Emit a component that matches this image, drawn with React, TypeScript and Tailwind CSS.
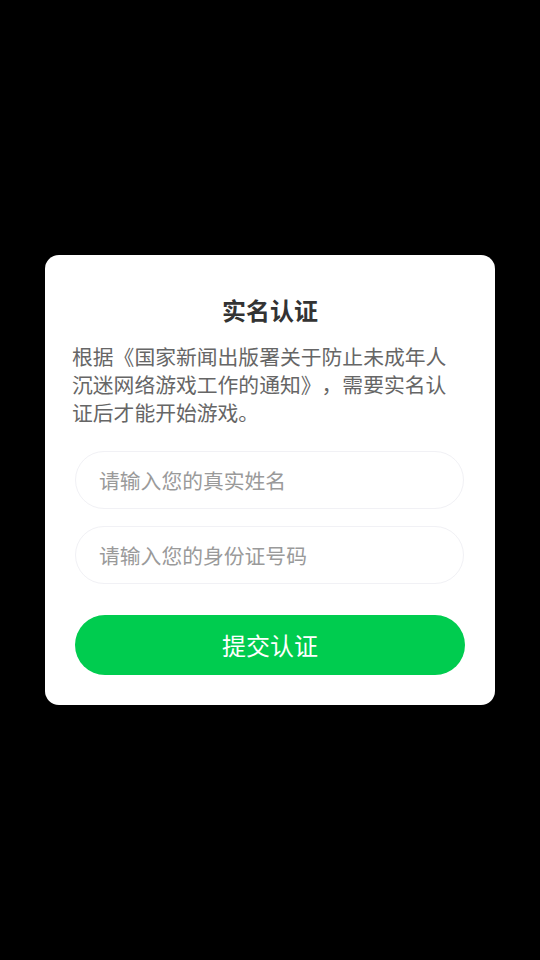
export default function App() {
  return (
    <div
      className="flex min-h-[960px] w-full items-center justify-center bg-black [text-spacing-trim:space-all]"
      style={{ fontFamily: '"Noto Sans CJK SC", "Noto Sans", sans-serif' }}
    >
      <div className="flex w-[450px] flex-col rounded-[14px] bg-white px-[30px] pt-[39px] pb-[30px]">
        {/* Title */}
        <h2 className="text-center text-[24px] font-bold leading-[32px] text-[#333333]">
          实名认证
        </h2>

        {/* Notice */}
        <p className="-ml-[3px] mt-[16px] text-[20.8px] leading-[28px] text-[#666666]">
          根据《国家新闻出版署关于防止未成年人沉迷网络游戏工作的通知》，需要实名认证后才能开始游戏。
        </p>

        {/* Inputs */}
        <input
          type="text"
          placeholder="请输入您的真实姓名"
          className="mt-[25px] h-[58px] w-[389px] rounded-full border border-[#f1f1f5] bg-white px-[23px] text-[20.8px] text-[#333333] outline-none placeholder:text-[#9a9a9a]"
        />
        <input
          type="text"
          placeholder="请输入您的身份证号码"
          className="mt-[17px] h-[58px] w-[389px] rounded-full border border-[#f1f1f5] bg-white px-[23px] text-[20.8px] text-[#333333] outline-none placeholder:text-[#9a9a9a]"
        />

        {/* Submit */}
        <button
          type="button"
          className="mt-[31px] h-[60px] w-full rounded-full bg-[#00cc4f] text-[24px] text-white"
        >
          提交认证
        </button>
      </div>
    </div>
  );
}
